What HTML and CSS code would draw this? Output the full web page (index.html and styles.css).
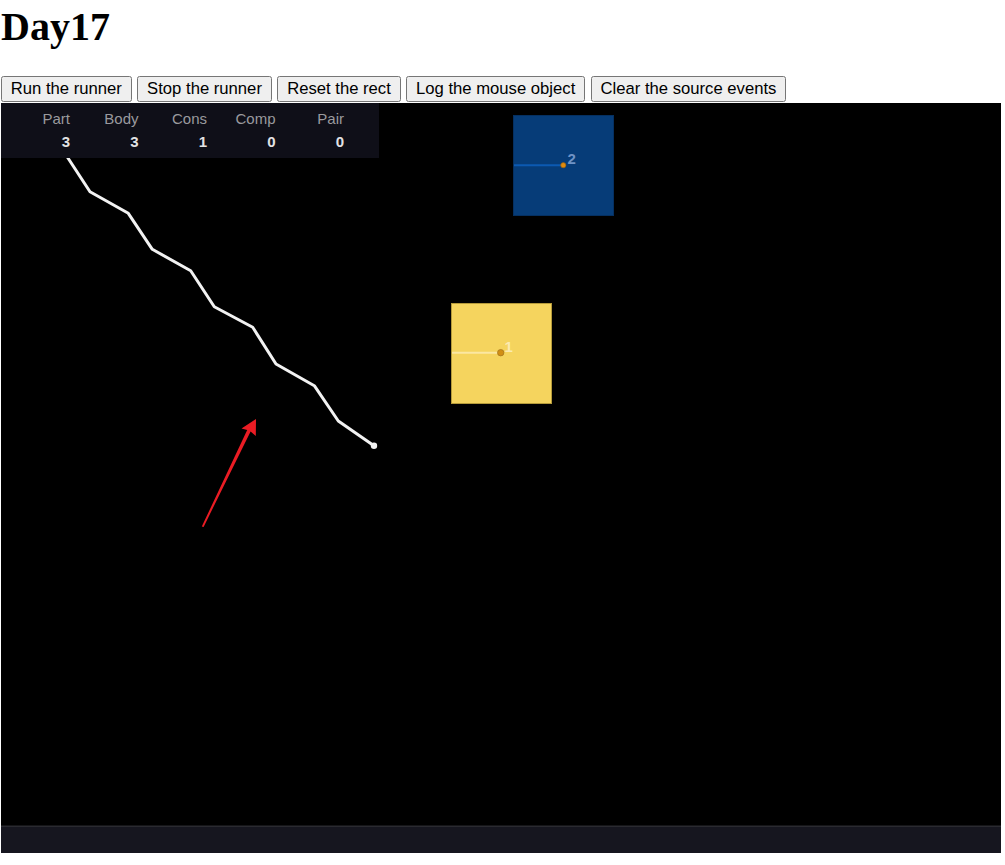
FILE: index.html
```html
<!DOCTYPE html>
<html>
<head>
<meta charset="utf-8">
<title>Day17</title>
<link rel="stylesheet" href="styles.css">
</head>
<body>
<h1 class="title">Day17</h1>
<div class="toolbar">
  <button class="btn">Run the runner</button>
  <button class="btn">Stop the runner</button>
  <button class="btn">Reset the rect</button>
  <button class="btn">Log the mouse object</button>
  <button class="btn">Clear the source events</button>
</div>
<div class="stage">
  <svg class="scene" width="1000" height="750" viewBox="0 0 1000 750">
    <rect x="0" y="0" width="1000" height="750" fill="#000"/>
    <!-- ground -->
    <rect x="0" y="723" width="1000" height="27" fill="#16161f"/>
    <rect x="0" y="722.5" width="1000" height="1.5" fill="#2a2a30"/>
    <!-- blue box -->
    <rect x="512.5" y="12.5" width="100" height="100" fill="#063c78" stroke="#053061" stroke-width="1"/>
    <line x1="513" y1="62.3" x2="562.3" y2="62.3" stroke="#0c5ab2" stroke-width="2"/>
    <circle cx="562.3" cy="62.2" r="2.6" fill="#e08b0e" stroke="#8a5a10" stroke-width="0.6"/>
    <text x="566.5" y="61" class="bid bid-blue">2</text>
    <!-- yellow box -->
    <rect x="450.5" y="200.5" width="100" height="100" fill="#f5d45e" stroke="#b59a3a" stroke-width="1"/>
    <line x1="451" y1="249.8" x2="499.7" y2="249.8" stroke="#fbe7a2" stroke-width="2"/>
    <circle cx="499.7" cy="249.7" r="3.2" fill="#d18e14" stroke="#a8781e" stroke-width="0.8"/>
    <text x="503.5" y="249" class="bid bid-yellow">1</text>
    <!-- mouse path -->
    <polyline points="40,14 65,52 89,88.7 127.3,110.3 151.3,146.3 189.7,167.7 213.3,203.7 251.7,224.3 275,261 313.3,282.7 337.3,318 373,342.7" fill="none" stroke="#f2f2f2" stroke-width="3" stroke-linejoin="round" stroke-linecap="round"/>
    <circle cx="373" cy="342.7" r="3.2" fill="#f2f2f2"/>
    <!-- red arrow -->
    <polygon points="200.8,423.6 202.6,423.9 249.6,328.6 254.8,333 255,316 240.5,325.6 246.2,327" fill="#ea1c24"/>
  </svg>
  <div class="stats">
    <span class="lbl">Part</span>
    <span class="lbl">Body</span>
    <span class="lbl">Cons</span>
    <span class="lbl">Comp</span>
    <span class="lbl">Pair</span>
    <span class="val">3</span>
    <span class="val">3</span>
    <span class="val">1</span>
    <span class="val">0</span>
    <span class="val">0</span>
  </div>
</div>
</body>
</html>
```
FILE: styles.css
```css
html, body {
  margin: 0;
  background: #fff;
}
body {
  padding: 4px 0 0 1px;
  font-family: "Liberation Serif", "Times New Roman", serif;
}
.title {
  margin: 0 0 26px;
  font-family: "Liberation Serif", "Times New Roman", serif;
  font-weight: bold;
  font-size: 40px;
  line-height: 46px;
  color: #000;
}
.toolbar {
  display: flex;
  gap: 5.6px;
  height: 27px;
  align-items: flex-start;
}
.btn {
  box-sizing: border-box;
  height: 26.3px;
  margin: 0;
  padding: 0 8.8px;
  border: 1px solid #767676;
  border-radius: 2.5px;
  background: #efefef;
  color: #000;
  font-family: "Liberation Sans", Arial, sans-serif;
  font-size: 16.67px;
  line-height: 20px;
  white-space: nowrap;
}
.stage {
  position: relative;
  width: 1000px;
  height: 750px;
}
.scene {
  display: block;
}
.bid {
  font-family: "Liberation Sans", Arial, sans-serif;
  font-size: 15px;
  font-weight: bold;
}
.bid-blue {
  fill: #6f93c6;
}
.bid-yellow {
  fill: #fbeab0;
}
.stats {
  position: absolute;
  left: 0;
  top: 0;
  width: 378px;
  height: 55px;
  box-sizing: border-box;
  padding: 7px 0 0 0.5px;
  background: #0f0f18;
  display: grid;
  grid-template-columns: repeat(5, 68.5px);
  grid-auto-rows: 18px;
  row-gap: 4.5px;
  font-family: "Liberation Sans", Arial, sans-serif;
  font-size: 15px;
  line-height: 18px;
}
.lbl {
  text-align: right;
  color: #9a9a9e;
}
.val {
  text-align: right;
  color: #e2e2e4;
  font-weight: bold;
}
```
